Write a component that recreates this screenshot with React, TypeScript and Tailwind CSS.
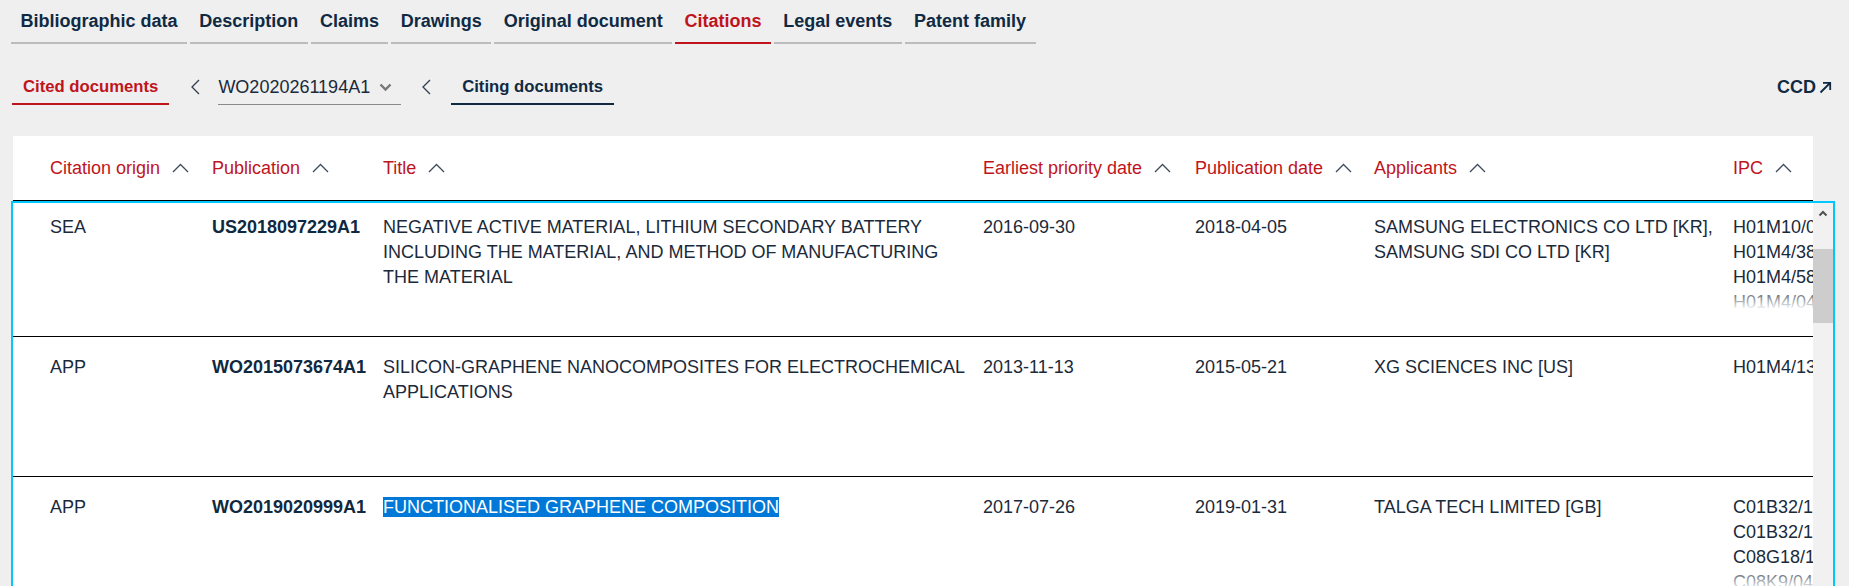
import React from "react";

const RED = "text-[#c0141c]";

const tabs = [
  "Bibliographic data",
  "Description",
  "Claims",
  "Drawings",
  "Original document",
  "Citations",
  "Legal events",
  "Patent family",
];

const columns = [
  "Citation origin",
  "Publication",
  "Title",
  "Earliest priority date",
  "Publication date",
  "Applicants",
  "IPC",
];

const rows = [
  {
    origin: "SEA",
    pub: "US2018097229A1",
    title:
      "NEGATIVE ACTIVE MATERIAL, LITHIUM SECONDARY BATTERY INCLUDING THE MATERIAL, AND METHOD OF MANUFACTURING THE MATERIAL",
    priority: "2016-09-30",
    date: "2018-04-05",
    applicants: ["SAMSUNG ELECTRONICS CO LTD [KR],", "SAMSUNG SDI CO LTD [KR]"],
    ipc: ["H01M10/052", "H01M4/386", "H01M4/587", "H01M4/04", "H01M4/133"],
  },
  {
    origin: "APP",
    pub: "WO2015073674A1",
    title: "SILICON-GRAPHENE NANOCOMPOSITES FOR ELECTROCHEMICAL APPLICATIONS",
    priority: "2013-11-13",
    date: "2015-05-21",
    applicants: ["XG SCIENCES INC [US]"],
    ipc: ["H01M4/133"],
  },
  {
    origin: "APP",
    pub: "WO2019020999A1",
    title: "FUNCTIONALISED GRAPHENE COMPOSITION",
    selected: true,
    priority: "2017-07-26",
    date: "2019-01-31",
    applicants: ["TALGA TECH LIMITED [GB]"],
    ipc: ["C01B32/184", "C01B32/194", "C08G18/10", "C08K9/04"],
  },
];

const grid =
  "grid grid-cols-[162px_171px_600px_212px_179px_359px_80px] pl-[37px]";

function Caret() {
  return (
    <svg width="17" height="10" viewBox="0 0 17 10" fill="none">
      <path d="M1 9 L8.5 1.5 L16 9" stroke="#3d4b5c" strokeWidth="1.3" />
    </svg>
  );
}

function ChevronLeft() {
  return (
    <svg width="10" height="16" viewBox="0 0 10 16" fill="none">
      <path d="M9 1 L2 8 L9 15" stroke="#2f3d4c" strokeWidth="1.3" />
    </svg>
  );
}

export default function App() {
  return (
    <div className="h-[586px] overflow-hidden bg-[#efefef] font-['Liberation_Sans',Arial,sans-serif]">
      {/* Main tabs */}
      <div className="flex gap-[3px] pl-[11px]">
        {tabs.map((t) => (
          <div
            key={t}
            className={
              t === "Citations"
                ? `px-[9.4px] pt-[10px] pb-[10px] text-[18px] leading-[22px] font-bold border-b-2 border-[#c0141c] ${RED}`
                : "px-[9.4px] pt-[10px] pb-[10px] text-[18px] leading-[22px] font-bold border-b-2 border-[#bcbcbc] text-[#102a43]"
            }
          >
            {t}
          </div>
        ))}
      </div>

      {/* Sub tabs */}
      <div className="mt-[32px] flex items-start h-[29px] pl-[12px] pr-[17px]">
        <div
          className={`px-[11px] pb-[5px] text-[16.7px] leading-[22px] font-bold border-b-2 border-[#c0141c] ${RED}`}
        >
          Cited documents
        </div>
        <div className="ml-[21px] h-[22px] flex items-center">
          <ChevronLeft />
        </div>
        <div className="ml-[18px] h-[29px] flex items-start border-b border-[#8a8a8a] pr-[9px]">
          <span className="text-[18px] leading-[22px] text-[#1b2a3a]">WO2020261194A1</span>
          <span className="ml-[9px] h-[22px] flex items-center">
            <svg width="13" height="9" viewBox="0 0 13 9" fill="none">
              <path d="M1.5 1.5 L6.5 6.5 L11.5 1.5" stroke="#777" strokeWidth="2.4" />
            </svg>
          </span>
        </div>
        <div className="ml-[20px] h-[22px] flex items-center">
          <ChevronLeft />
        </div>
        <div className="ml-[20px] px-[11px] pb-[5px] text-[16.7px] leading-[22px] font-bold border-b-2 border-[#102a43] text-[#102a43]">
          Citing documents
        </div>
        <div className="ml-auto h-[22px] flex items-center gap-[3px] text-[18px] font-bold text-[#102a43]">
          CCD
          <svg width="13" height="13" viewBox="0 0 13 13" fill="none">
            <path d="M1.5 11.5 L11 2 M4 1.8 H11.2 V9" stroke="#102a43" strokeWidth="1.8" />
          </svg>
        </div>
      </div>

      {/* Table */}
      <div className="mt-[31px] ml-[13px]">
        <div
          className={`${grid} w-[1800px] h-[65px] items-center bg-white border-b border-black overflow-hidden`}
        >
          {columns.map((c) => (
            <div key={c} className={`flex items-center gap-3 text-[18px] leading-[25px] whitespace-nowrap ${RED}`}>
              {c}
              <Caret />
            </div>
          ))}
        </div>

        <div className="-ml-[2px] w-[1824px] h-[400px] flex border-2 border-b-0 border-[#00c8ff] bg-white">
          <div className="w-[1800px] overflow-hidden">
            <div className="-mt-[6px]">
              {rows.map((r) => (
                <div
                  key={r.pub}
                  className={`${grid} h-[140px] border-b border-black pt-[18px] text-[18px] leading-[25px] text-[#1b2a3a]`}
                >
                  <div>{r.origin}</div>
                  <div className="font-bold text-[#0f2940]">{r.pub}</div>
                  <div className="pr-[12px]">
                    {r.selected ? (
                      <span className="bg-[#0078d7] text-white">{r.title}</span>
                    ) : (
                      r.title
                    )}
                  </div>
                  <div>{r.priority}</div>
                  <div>{r.date}</div>
                  <div className="pr-[10px]">
                    {r.applicants.map((a) => (
                      <div key={a}>{a}</div>
                    ))}
                  </div>
                  <div className="relative max-h-[95px] overflow-hidden whitespace-nowrap">
                    {r.ipc.map((p) => (
                      <div key={p}>{p}</div>
                    ))}
                    {r.ipc.length > 3 && (
                      <div className="absolute inset-x-0 bottom-0 h-[24px] bg-linear-to-b from-white/0 to-white" />
                    )}
                  </div>
                </div>
              ))}
            </div>
          </div>

          {/* Scrollbar */}
          <div className="relative w-[20px] bg-[#f1f1f1]">
            <div className="h-[20px] flex items-center justify-center">
              <svg width="10" height="7" viewBox="0 0 10 7" fill="none">
                <path d="M1.5 5.5 L5 2 L8.5 5.5" stroke="#505050" strokeWidth="2" />
              </svg>
            </div>
            <div className="absolute left-0 top-[46px] w-[20px] h-[74px] bg-[#cdcdcd]" />
          </div>
        </div>
      </div>
    </div>
  );
}
